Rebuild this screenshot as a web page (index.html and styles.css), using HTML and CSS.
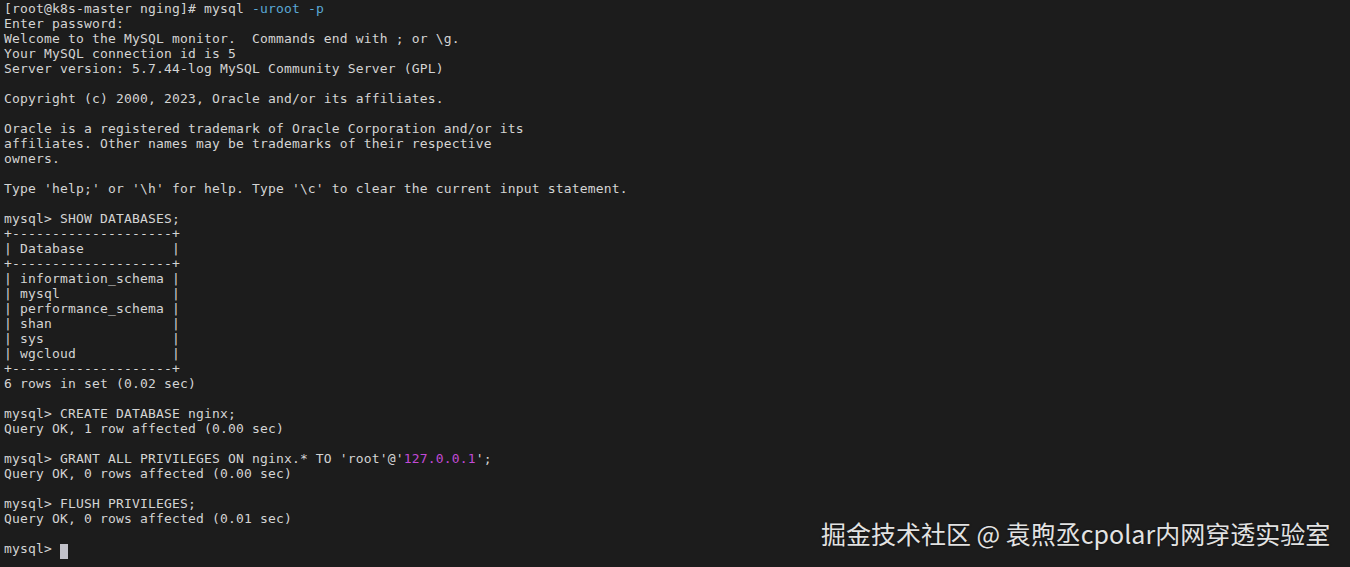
FILE: index.html
```html
<!DOCTYPE html>
<html>
<head>
<meta charset="utf-8">
<link rel="stylesheet" href="styles.css">
</head>
<body>
<div class="term">
<pre class="out">[root@k8s-master nging]# mysql <span class="arg">-uroot -p</span>
Enter password:
Welcome to the MySQL monitor.  Commands end with ; or \g.
Your MySQL connection id is 5
Server version: 5.7.44-log MySQL Community Server (GPL)

Copyright (c) 2000, 2023, Oracle and/or its affiliates.

Oracle is a registered trademark of Oracle Corporation and/or its
affiliates. Other names may be trademarks of their respective
owners.

Type 'help;' or '\h' for help. Type '\c' to clear the current input statement.

mysql&gt; SHOW DATABASES;
+--------------------+
| Database           |
+--------------------+
| information_schema |
| mysql              |
| performance_schema |
| shan               |
| sys                |
| wgcloud            |
+--------------------+
6 rows in set (0.02 sec)

mysql&gt; CREATE DATABASE nginx;
Query OK, 1 row affected (0.00 sec)

mysql&gt; GRANT ALL PRIVILEGES ON nginx.* TO 'root'@'<span class="str">127.0.0.1</span>';
Query OK, 0 rows affected (0.00 sec)

mysql&gt; FLUSH PRIVILEGES;
Query OK, 0 rows affected (0.01 sec)

mysql&gt; <span class="cursor"> </span></pre>
<div class="mark">掘金技术社区 @ 袁煦丞cpolar内网穿透实验室</div>
</div>
</body>
</html>
```
FILE: styles.css
```css
html, body {
  margin: 0;
  padding: 0;
  background: #1c1c1c;
  width: 1350px;
  height: 567px;
  overflow: hidden;
}
.term {
  position: relative;
  width: 1350px;
  height: 567px;
  overflow: hidden;
}
.out {
  margin: 0.5px 0 0 4px;
  font-family: "DejaVu Sans Mono", "Liberation Mono", monospace;
  font-size: 13px;
  letter-spacing: 0.17px;
  line-height: 15px;
  color: #d4d4d4;
}
.arg { color: #5aa8d6; }
.str { color: #c24ad6; }
.cursor {
  display: inline-block;
  width: 8px;
  height: 15px;
  background: #c2c2ca;
  vertical-align: -3px;
}
.mark {
  position: absolute;
  left: 821px;
  top: 515px;
  font-family: "Noto Sans CJK SC", "Noto Sans", sans-serif;
  font-size: 25px;
  line-height: 36px;
  color: #e2e2e2;
  text-shadow: 0 0 2px rgba(0,0,0,0.6);
  white-space: nowrap;
}
```
